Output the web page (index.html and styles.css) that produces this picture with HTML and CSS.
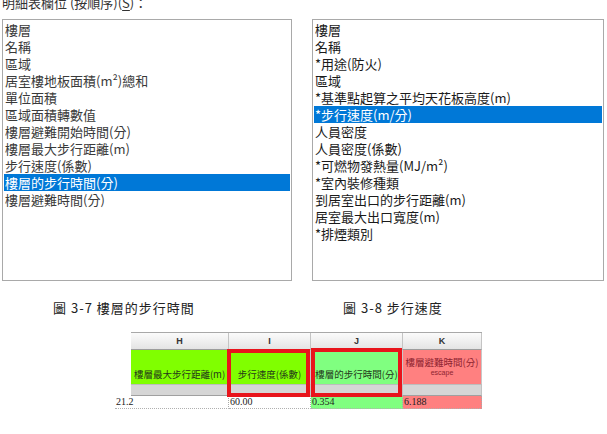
FILE: index.html
```html
<!DOCTYPE html>
<html lang="zh-Hant">

<head>
    <meta charset="UTF-8">
    <meta name="viewport" content="width=device-width, initial-scale=1.0">
    <title>明細表欄位</title>
    <link rel="stylesheet" href="styles.css">
</head>

<body>
    <div class="figures">
        <div class="panel panel-left">
            <div class="field-label">明細表欄位 (按順序)(<u>S</u>)：</div>
            <ul class="listbox">
                <li>樓層</li>
                <li>名稱</li>
                <li>區域</li>
                <li>居室樓地板面積(m²)總和</li>
                <li>單位面積</li>
                <li>區域面積轉數值</li>
                <li>樓層避難開始時間(分)</li>
                <li>樓層最大步行距離(m)</li>
                <li>步行速度(係數)</li>
                <li class="selected">樓層的步行時間(分)</li>
                <li>樓層避難時間(分)</li>
            </ul>
        </div>
        <div class="panel panel-right">
            <ul class="listbox listbox-dark">
                <li>樓層</li>
                <li>名稱</li>
                <li>*用途(防火)</li>
                <li>區域</li>
                <li>*基準點起算之平均天花板高度(m)</li>
                <li class="selected">*步行速度(m/分)</li>
                <li>人員密度</li>
                <li>人員密度(係數)</li>
                <li>*可燃物發熱量(MJ/m²)</li>
                <li>*室內裝修種類</li>
                <li>到居室出口的步行距離(m)</li>
                <li>居室最大出口寬度(m)</li>
                <li>*排煙類別</li>
            </ul>
        </div>
    </div>

    <div class="captions">
        <p>圖 3-7 樓層的步行時間</p>
        <p>圖 3-8 步行速度</p>
    </div>

    <div class="sheet">
        <!-- column letters -->
        <div class="col-head">H</div>
        <div class="col-head">I</div>
        <div class="col-head">J</div>
        <div class="col-head">K</div>

        <!-- field titles -->
        <div class="title lime">樓層最大步行距離(m)</div>
        <div class="title lime">步行速度(係數)</div>
        <div class="title mint">樓層的步行時間(分)</div>
        <div class="title rose">
            <span>樓層避難時間(分)</span>
            <span class="sub">escape</span>
        </div>

        <div class="gap-cell"></div>
        <div class="gap-cell"></div>
        <div class="gap-cell"></div>
        <div class="gap-cell"></div>

        <!-- first data row -->
        <div class="data data-lead">21.2</div>
        <div class="data">60.00</div>
        <div class="data mint">0.354</div>
        <div class="data rose">6.188</div>

        <!-- red marks around the two edited columns -->
        <div class="mark mark-i"></div>
        <div class="mark mark-j"></div>
    </div>
</body>

</html>
```

FILE: styles.css
```css
body {
    margin: 0;
    background-color: #fff;
    font-family: "Noto Sans CJK TC", "Noto Sans", sans-serif;
    overflow: hidden;
}

.figures {
    display: flex;
    align-items: flex-end;
    gap: 20px;
    padding-left: 2px;
}

.panel-left {
    width: 290px;
}

.panel-right {
    width: 292px;
}

.field-label {
    margin-top: -6px;
    margin-bottom: 8px;
    font-size: 13px;
    line-height: 17px;
    color: #333;
}

.field-label u {
    text-underline-offset: 2px;
}

.listbox {
    list-style: none;
    margin: 0;
    padding: 1px 1px;
    height: 262px;
    box-sizing: border-box;
    border: 1px solid #a9a9a9;
    background-color: #fff;
    font-size: 13px;
    line-height: 17px;
    color: #3a3a3a;
}

.listbox li {
    padding-left: 1px;
    white-space: nowrap;
}

.listbox-dark {
    color: #1a1a1a;
}

.listbox .selected {
    background-color: #0078d7;
    color: #fff;
}

.captions {
    display: grid;
    grid-template-columns: 290px auto;
    margin-top: 17px;
    padding-left: 53px;
}

.captions p {
    margin: 0;
    font-size: 13px;
    line-height: 20px;
    letter-spacing: 1px;
    color: #222;
}

/* spreadsheet fragment */
.sheet {
    position: relative;
    display: grid;
    grid-template-columns: 98px 82px 92px 79px;
    grid-template-rows: 17px 34px 12px 13px;
    width: 351px;
    margin: 14px 0 0 131px;
    border-top: 1px solid #a8a8a8;
}

.col-head {
    display: flex;
    align-items: center;
    justify-content: center;
    background: linear-gradient(#fbfbfb, #e4e4e4);
    border-right: 1px solid #c4c4c4;
    border-bottom: 1px solid #9c9c9c;
    font-family: "Liberation Sans", Arial, sans-serif;
    font-size: 9px;
    font-weight: bold;
    color: #333;
}

.title {
    display: flex;
    flex-direction: column;
    align-items: center;
    justify-content: flex-end;
    padding-bottom: 4px;
    border-right: 1px solid #c8c8c8;
    font-size: 9.5px;
    line-height: 12px;
    color: #24381a;
    white-space: nowrap;
    overflow: hidden;
}

.title.rose {
    justify-content: center;
    padding-bottom: 0;
    color: #8e2430;
}

.title .sub {
    font-family: "Liberation Sans", Arial, sans-serif;
    font-size: 7px;
    line-height: 10px;
}

.lime {
    background-color: #80ff00;
}

.mint {
    background-color: #80ff80;
}

.rose {
    background-color: #ff8080;
}

.gap-cell {
    background-color: #d6d6d6;
    border-top: 1px solid #bdbdbd;
    border-right: 1px solid #c2c2c2;
    border-bottom: 1px solid #a0a0a0;
}

.data {
    padding-left: 1px;
    border-right: 1px dotted #a8a8a8;
    border-bottom: 1px dotted #b0b0b0;
    font-family: "Liberation Serif", "Times New Roman", serif;
    font-size: 10px;
    line-height: 12px;
    color: #222;
}

.data-lead {
    margin-left: -16px;
}

/* the marks sit over the cells, so they stay out of the auto placement */
.mark {
    position: absolute;
    grid-row: 2 / 4;
    border: 4px solid #e8141c;
    z-index: 1;
}

.mark-i {
    grid-column: 2 / 3;
    inset: -1px 1px -1px -2px;
}

.mark-j {
    grid-column: 3 / 4;
    inset: -2px 1px -1px 0;
}
```
